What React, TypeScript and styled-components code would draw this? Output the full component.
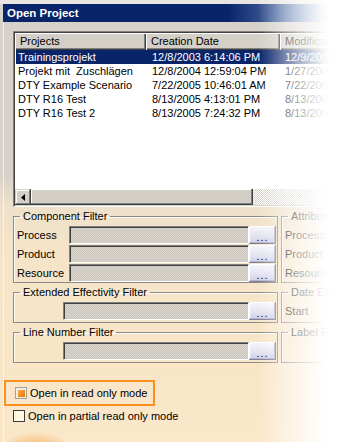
import React from 'react';
import styled, { createGlobalStyle } from 'styled-components';

const GlobalStyle = createGlobalStyle`
  html, body {
    margin: 0;
    padding: 0;
    background: #fff;
  }
  body {
    font-family: "Liberation Sans", Arial, sans-serif;
    font-size: 11px;
    color: #000;
  }
`;

const Frame = styled.div`
  position: relative;
  width: 354px;
  height: 442px;
  overflow: hidden;
  box-sizing: border-box;
  padding-top: 4px;
  background:
    radial-gradient(ellipse 34px 14px at 36px 446px, rgba(244, 176, 88, 0.8), rgba(244, 176, 88, 0) 100%),
    linear-gradient(
      to bottom,
      #e9e6e2 0,
      #e9e6e2 4px,
      #d7d1cb 4px,
      #d8d1c9 175px,
      #eee0ca 205px,
      #f5e4c8 250px,
      #fbe7c9 100%
    );
`;

const TitleBar = styled.div`
  margin-left: 3px;
  height: 18px;
  line-height: 18px;
  padding-left: 4px;
  font-weight: bold;
  font-size: 11.5px;
  color: #fff;
  background: linear-gradient(to right, #0a246a 0, #0a246a 225px, #a6caf0 100%);
`;

const Body = styled.div`
  margin-left: 3px;
  padding: 9px 0 0 9px;
  border-left: 1px solid rgba(255, 255, 255, 0.6);
  min-height: 420px;
`;

const ListBox = styled.div`
  width: 420px;
  height: 176px;
  box-sizing: border-box;
  padding: 1px;
  display: flex;
  flex-direction: column;
  background: #fff;
  border-top: 1px solid #808080;
  border-left: 1px solid #808080;
  border-bottom: 1px solid #fff;
  border-right: 1px solid #fff;
  box-shadow: inset 1px 1px #404040, inset -1px -1px #d4d0c8;
`;

const HeaderRow = styled.div`
  display: flex;
  height: 17px;
  flex: none;
`;

const HeaderCell = styled.div<{ $w?: number }>`
  width: ${p => (p.$w ? `${p.$w}px` : 'auto')};
  flex: ${p => (p.$w ? 'none' : '1')};
  box-sizing: border-box;
  padding-left: 5px;
  line-height: 16px;
  background: #d4d0c8;
  box-shadow: inset 1px 1px #fff, inset -1px -1px #404040, inset -2px -2px #808080;
  white-space: nowrap;
  overflow: hidden;
`;

const Rows = styled.div`
  flex: 1;
`;

const Row = styled.div<{ $selected?: boolean }>`
  display: flex;
  height: 14px;
  line-height: 14px;
  margin-left: 1px;
  background: ${p => (p.$selected ? '#0a246a' : 'transparent')};
  color: ${p => (p.$selected ? '#fff' : '#000')};
`;

const Cell = styled.div<{ $w?: number }>`
  width: ${p => (p.$w ? `${p.$w}px` : 'auto')};
  flex: ${p => (p.$w ? 'none' : '1')};
  padding-left: 2px;
  box-sizing: border-box;
  white-space: pre;
`;

const HScroll = styled.div`
  display: flex;
  height: 16px;
  flex: none;
`;

const raised = `
  background-color: #d4d0c8;
  box-shadow: inset -1px -1px #404040, inset 1px 1px #d4d0c8, inset -2px -2px #808080, inset 2px 2px #fff;
`;

const ArrowButton = styled.div`
  width: 16px;
  height: 16px;
  flex: none;
  display: flex;
  align-items: center;
  justify-content: center;
  ${raised}
`;

const Thumb = styled.div`
  width: 222px;
  height: 16px;
  flex: none;
  background-color: #d4d0c8;
  background-image: repeating-conic-gradient(#d8d4cc 0 25%, #cdc9c1 0 50%);
  background-size: 2px 2px;
  box-shadow: inset -1px -1px #404040, inset -2px -2px #808080, inset 1px 1px #fff;
`;

const Track = styled.div`
  flex: 1;
  background-image: repeating-conic-gradient(#d4d0c8 0 25%, #fff 0 50%);
  background-size: 2px 2px;
`;

const FilterGrid = styled.div`
  display: grid;
  grid-template-columns: 265px 120px;
  column-gap: 3px;
  row-gap: 3px;
  margin-top: 3px;
`;

const Group = styled.fieldset<{ $pb?: number }>`
  margin: 0;
  padding: 0 0 ${p => p.$pb ?? 2}px 0;
  min-width: 0;
  border: 1px solid #8c8a86;
  box-shadow: inset 1px 1px rgba(255, 255, 255, 0.85);
`;

const Legend = styled.legend`
  margin-left: 6px;
  padding: 0 3px;
  line-height: 13px;
  font-size: 11px;
`;

const GroupBody = styled.div`
  display: flex;
  flex-direction: column;
  gap: 1px;
  padding: 3px 1px 0 3px;
`;

const FieldRow = styled.div`
  display: flex;
  align-items: center;
  height: 18px;
`;

const FieldLabel = styled.div<{ $w: number }>`
  width: ${p => p.$w}px;
  flex: none;
  white-space: nowrap;
`;

const Field = styled.div<{ $w: number }>`
  width: ${p => p.$w}px;
  height: 18px;
  flex: none;
  box-sizing: border-box;
  background-color: #d4d0c8;
  background-image: repeating-conic-gradient(#d9d5cd 0 25%, #cbc7bf 0 50%);
  background-size: 2px 2px;
  border-top: 1px solid #808080;
  border-left: 1px solid #808080;
  border-bottom: 1px solid #fff;
  border-right: 1px solid #fff;
  box-shadow: inset 1px 1px #404040;
`;

const DotsButton = styled.div`
  width: 27px;
  height: 18px;
  flex: none;
  box-sizing: border-box;
  display: flex;
  align-items: flex-end;
  justify-content: center;
  padding-bottom: 1px;
  line-height: 11px;
  font-size: 11px;
  letter-spacing: 1px;
  background: linear-gradient(to bottom, #f6f6fb 0, #e4e4f1 55%, #cfcfe4 100%);
  box-shadow: inset -1px -1px #7e7e9a, inset 1px 1px #fff, inset -2px -2px #b4b4cc;
`;

const SideLabel = styled.div`
  height: 18px;
  line-height: 18px;
  white-space: nowrap;
`;

const Options = styled.div`
  margin-top: 17px;
  display: flex;
  flex-direction: column;
  gap: 3px;
`;

const Highlight = styled.div`
  margin-left: -9px;
  width: 151px;
  height: 26px;
  box-sizing: border-box;
  border: 2px solid #f7921e;
  padding-left: 9px;
  display: flex;
  align-items: center;
`;

const CheckRow = styled.label`
  display: flex;
  align-items: center;
  gap: 3px;
  height: 14px;
  white-space: nowrap;
`;

const Box = styled.span<{ $checked?: boolean }>`
  width: 12px;
  height: 12px;
  flex: none;
  box-sizing: border-box;
  display: flex;
  align-items: center;
  justify-content: center;
  border: 1px solid ${p => (p.$checked ? '#a8a098' : '#3c3c3c')};
  background: ${p => (p.$checked ? '#f3ede4' : '#fdf8e4')};

  &::after {
    content: '';
    display: ${p => (p.$checked ? 'block' : 'none')};
    width: 7px;
    height: 7px;
    background: linear-gradient(135deg, #f8b25a 0, #f08a1c 60%, #e07a10 100%);
  }
`;

const FadeOverlay = styled.div`
  position: absolute;
  top: 0;
  bottom: 0;
  right: 0;
  width: 96px;
  pointer-events: none;
  background: linear-gradient(
    to right,
    rgba(255, 255, 255, 0) 0,
    rgba(255, 255, 255, 0.22) 14px,
    rgba(255, 255, 255, 0.45) 27px,
    rgba(255, 255, 255, 0.72) 47px,
    rgba(255, 255, 255, 0.95) 65px,
    #fff 72px,
    #fff 100%
  );
`;

const projects = [
  { name: 'Trainingsprojekt', created: '12/8/2003 6:14:06 PM', modified: '12/9/2003 9:12:44 AM' },
  { name: 'Projekt mit  Zuschlägen', created: '12/8/2004 12:59:04 PM', modified: '1/27/2005 3:20:11 PM' },
  { name: 'DTY Example Scenario', created: '7/22/2005 10:46:01 AM', modified: '7/22/2005 11:02:37 AM' },
  { name: 'DTY R16 Test', created: '8/13/2005 4:13:01 PM', modified: '8/13/2005 4:40:12 PM' },
  { name: 'DTY R16 Test 2', created: '8/13/2005 7:24:32 PM', modified: '8/13/2005 7:30:05 PM' },
];

const LeftArrow = () => (
  <svg width="4" height="7" viewBox="0 0 4 7">
    <path d="M4 0 L0 3.5 L4 7 Z" fill="#000" />
  </svg>
);

const Check: React.FC<{ checked?: boolean; children: React.ReactNode }> = ({ checked, children }) => (
  <CheckRow>
    <Box $checked={checked} />
    <span>{children}</span>
  </CheckRow>
);

export default function App() {
  return (
    <>
      <GlobalStyle />
      <Frame>
        <TitleBar>Open Project</TitleBar>
        <Body>
          <ListBox>
            <HeaderRow>
              <HeaderCell $w={131}>Projects</HeaderCell>
              <HeaderCell $w={134}>Creation Date</HeaderCell>
              <HeaderCell>Modification Date</HeaderCell>
            </HeaderRow>
            <Rows>
              {projects.map((p, i) => (
                <Row key={p.name} $selected={i === 0}>
                  <Cell $w={134}>{p.name}</Cell>
                  <Cell $w={133}>{p.created}</Cell>
                  <Cell>{p.modified}</Cell>
                </Row>
              ))}
            </Rows>
            <HScroll>
              <ArrowButton>
                <LeftArrow />
              </ArrowButton>
              <Thumb />
              <Track />
            </HScroll>
          </ListBox>

          <FilterGrid>
            <Group $pb={0}>
              <Legend>Component Filter</Legend>
              <GroupBody>
                {['Process', 'Product', 'Resource'].map(label => (
                  <FieldRow key={label}>
                    <FieldLabel $w={52}>{label}</FieldLabel>
                    <Field $w={180} />
                    <DotsButton>...</DotsButton>
                  </FieldRow>
                ))}
              </GroupBody>
            </Group>
            <Group $pb={0}>
              <Legend>Attribute Filter</Legend>
              <GroupBody>
                <SideLabel>Process</SideLabel>
                <SideLabel>Product</SideLabel>
                <SideLabel>Resource</SideLabel>
              </GroupBody>
            </Group>

            <Group>
              <Legend>Extended Effectivity Filter</Legend>
              <GroupBody>
                <FieldRow>
                  <FieldLabel $w={46} />
                  <Field $w={186} />
                  <DotsButton>...</DotsButton>
                </FieldRow>
              </GroupBody>
            </Group>
            <Group>
              <Legend>Date Effectivity</Legend>
              <GroupBody>
                <SideLabel>Start</SideLabel>
              </GroupBody>
            </Group>

            <Group>
              <Legend>Line Number Filter</Legend>
              <GroupBody>
                <FieldRow>
                  <FieldLabel $w={46} />
                  <Field $w={186} />
                  <DotsButton>...</DotsButton>
                </FieldRow>
              </GroupBody>
            </Group>
            <Group>
              <Legend>Label Filter</Legend>
              <GroupBody>
                <SideLabel />
              </GroupBody>
            </Group>
          </FilterGrid>

          <Options>
            <Highlight>
              <Check checked>Open in read only mode</Check>
            </Highlight>
            <Check>Open in partial read only mode</Check>
          </Options>
        </Body>
        <FadeOverlay />
      </Frame>
    </>
  );
}
